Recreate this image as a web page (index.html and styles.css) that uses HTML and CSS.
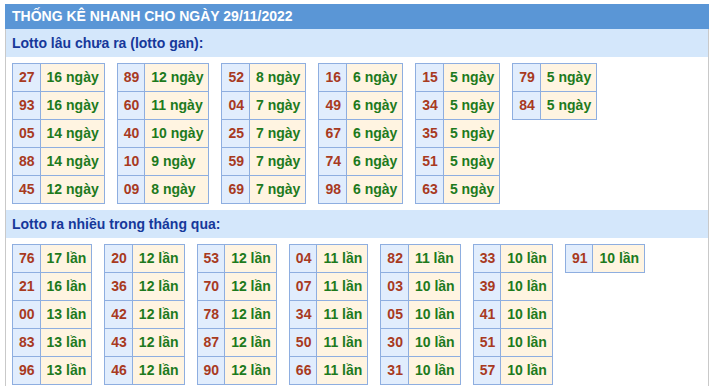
FILE: index.html
```html
<!DOCTYPE html>
<html lang="vi">
<head>
<meta charset="utf-8">
<title>Thống kê nhanh</title>
<link rel="stylesheet" href="styles.css">
</head>
<body>
<div class="box">
  <div class="title">THỐNG KÊ NHANH CHO NGÀY 29/11/2022</div>
  <div class="sub">Lotto lâu chưa ra (lotto gan):</div>
  <div class="grid">
    <table><tbody>
      <tr><td class="n">27</td><td class="v">16 ngày</td></tr>
      <tr><td class="n">93</td><td class="v">16 ngày</td></tr>
      <tr><td class="n">05</td><td class="v">14 ngày</td></tr>
      <tr><td class="n">88</td><td class="v">14 ngày</td></tr>
      <tr><td class="n">45</td><td class="v">12 ngày</td></tr>
    </tbody></table>
    <table><tbody>
      <tr><td class="n">89</td><td class="v">12 ngày</td></tr>
      <tr><td class="n">60</td><td class="v">11 ngày</td></tr>
      <tr><td class="n">40</td><td class="v">10 ngày</td></tr>
      <tr><td class="n">10</td><td class="v">9 ngày</td></tr>
      <tr><td class="n">09</td><td class="v">8 ngày</td></tr>
    </tbody></table>
    <table><tbody>
      <tr><td class="n">52</td><td class="v">8 ngày</td></tr>
      <tr><td class="n">04</td><td class="v">7 ngày</td></tr>
      <tr><td class="n">25</td><td class="v">7 ngày</td></tr>
      <tr><td class="n">59</td><td class="v">7 ngày</td></tr>
      <tr><td class="n">69</td><td class="v">7 ngày</td></tr>
    </tbody></table>
    <table><tbody>
      <tr><td class="n">16</td><td class="v">6 ngày</td></tr>
      <tr><td class="n">49</td><td class="v">6 ngày</td></tr>
      <tr><td class="n">67</td><td class="v">6 ngày</td></tr>
      <tr><td class="n">74</td><td class="v">6 ngày</td></tr>
      <tr><td class="n">98</td><td class="v">6 ngày</td></tr>
    </tbody></table>
    <table><tbody>
      <tr><td class="n">15</td><td class="v">5 ngày</td></tr>
      <tr><td class="n">34</td><td class="v">5 ngày</td></tr>
      <tr><td class="n">35</td><td class="v">5 ngày</td></tr>
      <tr><td class="n">51</td><td class="v">5 ngày</td></tr>
      <tr><td class="n">63</td><td class="v">5 ngày</td></tr>
    </tbody></table>
    <table><tbody>
      <tr><td class="n">79</td><td class="v">5 ngày</td></tr>
      <tr><td class="n">84</td><td class="v">5 ngày</td></tr>
    </tbody></table>
  </div>
  <div class="sub">Lotto ra nhiều trong tháng qua:</div>
  <div class="grid">
    <table><tbody>
      <tr><td class="n">76</td><td class="v">17 lần</td></tr>
      <tr><td class="n">21</td><td class="v">16 lần</td></tr>
      <tr><td class="n">00</td><td class="v">13 lần</td></tr>
      <tr><td class="n">83</td><td class="v">13 lần</td></tr>
      <tr><td class="n">96</td><td class="v">13 lần</td></tr>
    </tbody></table>
    <table><tbody>
      <tr><td class="n">20</td><td class="v">12 lần</td></tr>
      <tr><td class="n">36</td><td class="v">12 lần</td></tr>
      <tr><td class="n">42</td><td class="v">12 lần</td></tr>
      <tr><td class="n">43</td><td class="v">12 lần</td></tr>
      <tr><td class="n">46</td><td class="v">12 lần</td></tr>
    </tbody></table>
    <table><tbody>
      <tr><td class="n">53</td><td class="v">12 lần</td></tr>
      <tr><td class="n">70</td><td class="v">12 lần</td></tr>
      <tr><td class="n">78</td><td class="v">12 lần</td></tr>
      <tr><td class="n">87</td><td class="v">12 lần</td></tr>
      <tr><td class="n">90</td><td class="v">12 lần</td></tr>
    </tbody></table>
    <table><tbody>
      <tr><td class="n">04</td><td class="v">11 lần</td></tr>
      <tr><td class="n">07</td><td class="v">11 lần</td></tr>
      <tr><td class="n">34</td><td class="v">11 lần</td></tr>
      <tr><td class="n">50</td><td class="v">11 lần</td></tr>
      <tr><td class="n">66</td><td class="v">11 lần</td></tr>
    </tbody></table>
    <table><tbody>
      <tr><td class="n">82</td><td class="v">11 lần</td></tr>
      <tr><td class="n">03</td><td class="v">10 lần</td></tr>
      <tr><td class="n">05</td><td class="v">10 lần</td></tr>
      <tr><td class="n">30</td><td class="v">10 lần</td></tr>
      <tr><td class="n">31</td><td class="v">10 lần</td></tr>
    </tbody></table>
    <table><tbody>
      <tr><td class="n">33</td><td class="v">10 lần</td></tr>
      <tr><td class="n">39</td><td class="v">10 lần</td></tr>
      <tr><td class="n">41</td><td class="v">10 lần</td></tr>
      <tr><td class="n">51</td><td class="v">10 lần</td></tr>
      <tr><td class="n">57</td><td class="v">10 lần</td></tr>
    </tbody></table>
    <table><tbody>
      <tr><td class="n">91</td><td class="v">10 lần</td></tr>
    </tbody></table>
  </div>
</div>
</body>
</html>
```

FILE: styles.css
```css
html, body {
  background: #ffffff;
}
body {
  margin: 4px 4px 0 5px;
  font-family: "Liberation Sans", Arial, sans-serif;
  font-size: 14px;
  font-weight: bold;
}
.box {
  border-left: 1px solid #c9c9c9;
  border-right: 1px solid #c9c9c9;
  min-height: 400px;
}
.title {
  background: #5a96d6;
  color: #ffffff;
  line-height: 25px;
  height: 25px;
  margin: 0 -1px;
  padding-left: 7px;
}
.sub {
  background: #d4e7fb;
  color: #16389a;
  line-height: 28px;
  height: 28px;
  padding-left: 6px;
}
.grid {
  display: flex;
  align-items: flex-start;
  gap: 12px;
  padding: 6px 6px;
}
table {
  border-collapse: collapse;
}
td {
  border: 1px solid #8eaee0;
  padding: 6px 5px 6px 6px;
  line-height: 15px;
  white-space: nowrap;
}
td.n {
  background: #e1edfd;
  color: #a83a1f;
}
td.v {
  background: #fff4e1;
  color: #1d7a1d;
}
```
